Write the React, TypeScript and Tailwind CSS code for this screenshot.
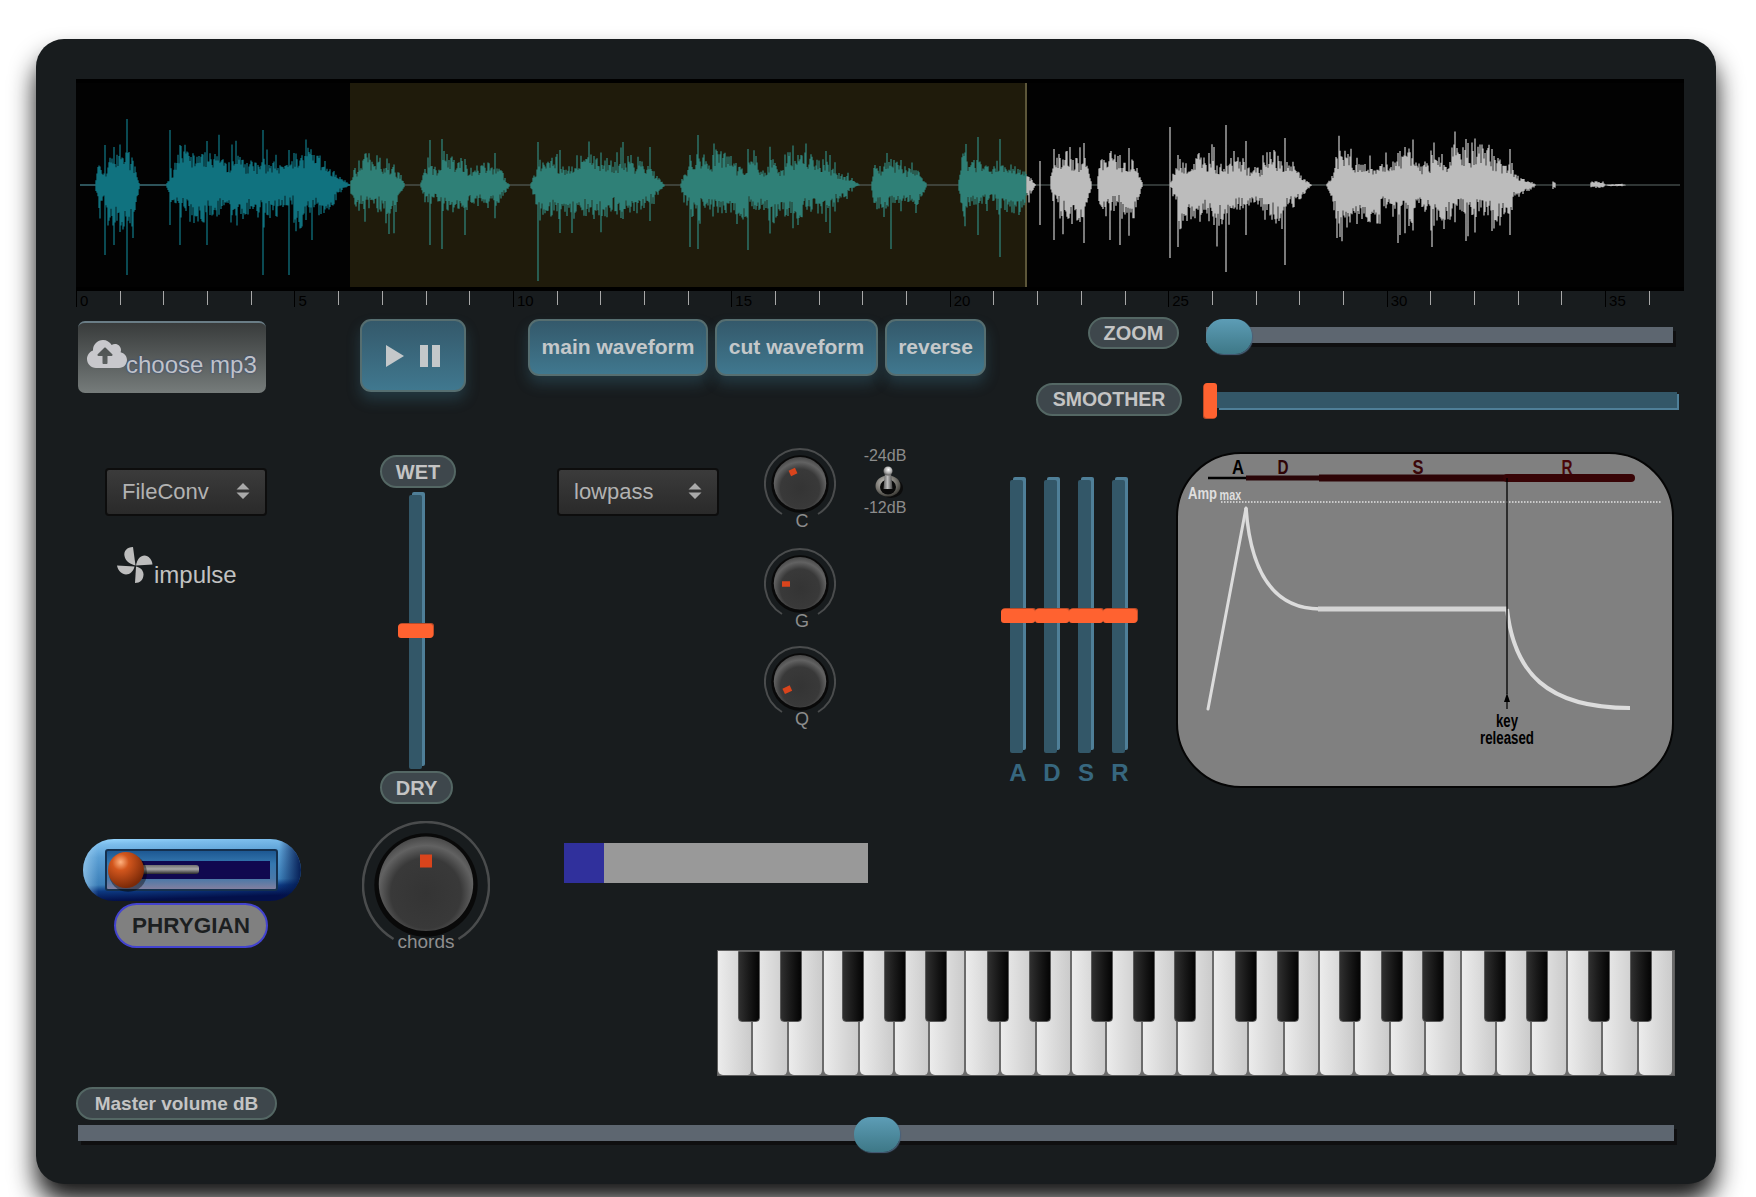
import { FaCloudUploadAlt } from 'react-icons/fa';

// envelope of the loaded sample: start, end, up, down (px in page coords)
const BLOBS: [number, number, number, number][] = [
  [95, 140, 36, 50], [166, 350, 36, 46], [350, 405, 30, 34], [420, 510, 32, 38],
  [530, 665, 34, 38], [680, 860, 34, 42], [871, 927, 28, 30], [958, 1036, 38, 44],
  [1050, 1092, 44, 46], [1097, 1143, 32, 40], [1170, 1312, 34, 46], [1326, 1536, 38, 46],
  [1552, 1556, 3, 3], [1590, 1606, 4, 3], [1606, 1626, 2, 2],
];
const SPIKES: [number, number, number][] = [
  [105, 40, 70], [114, 38, 60], [127, 66, 90], [170, 55, 40], [180, 40, 60], [207, 44, 60], [263, 55, 90],
  [289, 35, 90], [312, 30, 55], [430, 45, 60], [442, 46, 64], [465, 26, 50], [538, 43, 96], [560, 35, 48],
  [650, 38, 36], [698, 50, 64], [690, 30, 62], [748, 36, 65], [798, 30, 40], [830, 30, 48], [891, 26, 64],
  [978, 48, 50], [1000, 46, 72], [1040, 24, 40], [1054, 36, 55], [1084, 42, 58], [1110, 32, 55], [1120, 30, 60],
  [1170, 58, 73], [1178, 30, 62], [1214, 38, 40], [1226, 60, 87], [1246, 44, 50], [1285, 47, 80], [1340, 26, 52],
  [1398, 32, 58], [1400, 34, 50], [1432, 30, 62], [1466, 46, 56], [1492, 36, 46], [1510, 36, 50],
];

function buildWave() {
  let seed = 12345;
  const rnd = () => {
    seed = (seed * 1664525 + 1013904223) % 4294967296;
    return seed / 4294967296;
  };
  const cols: { x: number; up: number; down: number }[] = [];
  for (const [s, e, up, down] of BLOBS) {
    let slowUp = 1;
    let slowDown = 1;
    let next = s;
    for (let x = s; x < e; x += 1) {
      if (x >= next) {
        slowUp = 0.5 + 0.6 * rnd();
        slowDown = 0.45 + 0.6 * rnd();
        next = x + 6 + rnd() * 12;
      }
      const t = (x - s) / (e - s);
      const env = Math.min(1, t * 16) * Math.min(1, (1 - t) * 5);
      const a = 0.45 + 0.55 * rnd();
      const b = 0.45 + 0.55 * rnd();
      const kick = rnd() > 0.88 ? 1.5 : 1;
      cols.push({ x: x - 76, up: env * up * slowUp * a * kick, down: env * down * slowDown * b * kick });
    }
  }
  for (const [x, up, down] of SPIKES) cols.push({ x: x - 76, up, down });
  return cols;
}

const waveCols = buildWave();
const wavePath = (from: number, to: number) =>
  waveCols
    .filter((c) => c.x >= from && c.x < to)
    .map((c) => `M${c.x.toFixed(2)} ${(102 - c.up).toFixed(1)}V${(102 + c.down).toFixed(1)}`)
    .join('');

function Waveform() {
  return (
    <div className="relative h-[212px] w-[1608px] border-y-4 border-black bg-[#020202]">
      <div className="absolute left-[274px] top-0 h-full w-[677px] border-r-2 border-[#5c5639] bg-[#1f1b0b]" />
      <svg className="absolute inset-0" width="1608" height="204" viewBox="0 0 1608 204">
        <path d="M4 102H1604" stroke="#5f6a68" strokeWidth="1" />
        <path d="M4 102H274" stroke="#2a7080" strokeWidth="1" />
        <path d={wavePath(0, 274)} stroke="#10727f" strokeWidth="1.3" fill="none" />
        <path d={wavePath(274, 951)} stroke="#2f8077" strokeWidth="1.3" fill="none" />
        <path d={wavePath(951, 1608)} stroke="#bcbcbc" strokeWidth="1.3" fill="none" />
      </svg>
    </div>
  );
}

function Ruler() {
  return (
    <div className="flex h-4 items-start">
      {Array.from({ length: 37 }).map((_, i) =>
        i % 5 === 0 ? (
          <div key={i} className="h-4 w-[43.7px] shrink-0 border-l border-black pl-[3px] text-[15px] leading-[19px] text-black">
            {i}
          </div>
        ) : (
          <div key={i} className="h-[14px] w-[43.7px] shrink-0 border-l border-[#a8a8a8]" />
        )
      )}
    </div>
  );
}

function Pill({ children, className }: { children: React.ReactNode; className: string }) {
  return (
    <div className={`flex shrink-0 items-center justify-center rounded-full border-2 border-[#546764] bg-[#3e474c] font-bold text-[#c4c4c4] ${className}`}>
      {children}
    </div>
  );
}

function BlueButton({ children, className }: { children: React.ReactNode; className: string }) {
  return (
    <div className={`flex shrink-0 items-center justify-center rounded-[11px] border-2 border-[#566e70] bg-gradient-to-b from-[#34596b] to-[#40788f] text-[21px] font-bold text-[#c4c8ca] shadow-[0_8px_14px_rgba(64,130,155,0.28)] ${className}`}>
      {children}
    </div>
  );
}

function Select({ label, className }: { label: string; className: string }) {
  return (
    <div className={`flex h-12 w-[162px] items-center justify-between rounded-[4px] border-2 border-[#0d0d0d] bg-gradient-to-b from-[#3b3b3b] to-[#2a2a2a] pb-[2px] pl-[15px] pr-[15px] text-[22px] text-[#b2b2b2] ${className}`}>
      <span>{label}</span>
      <svg width="14" height="18" viewBox="0 0 14 18" fill="#a9a9a9">
        <path d="M7 1l6.500 6.500H.5zM7 17L.5 10.500h13z" />
      </svg>
    </div>
  );
}

// rotary knob: r is the radius of the outer ring
function Knob({ r, mark }: { r: number; mark: { x: number; y: number; w: number; h: number; rot: number } }) {
  const c = r + 1;
  const knob = r * 0.75;
  const gap = (31 * Math.PI) / 180;
  const dx = r * Math.sin(gap);
  const dy = r * Math.cos(gap);
  const gid = `knob${r}`;
  return (
    <svg width={c * 2} height={c * 2} viewBox={`0 0 ${c * 2} ${c * 2}`} className="block">
      <defs>
        <radialGradient id={gid} cx="50%" cy="60%" r="60%">
          <stop offset="0%" stopColor="#343434" />
          <stop offset="62%" stopColor="#393939" />
          <stop offset="84%" stopColor="#626262" />
          <stop offset="100%" stopColor="#484848" />
        </radialGradient>
      </defs>
      <path
        d={`M${c - dx} ${c + dy}A${r} ${r} 0 1 1 ${c + dx} ${c + dy}`}
        fill="none"
        stroke="#4a4c4d"
        strokeWidth={r > 50 ? 2.5 : 2}
      />
      <circle cx={c} cy={c} r={knob + r * 0.07} fill="#090909" />
      <circle cx={c} cy={c - r * 0.02} r={knob} fill={`url(#${gid})`} />
      <rect
        x={c + mark.x - mark.w / 2}
        y={c + mark.y - mark.h / 2}
        width={mark.w}
        height={mark.h}
        fill="#d9441c"
        transform={`rotate(${mark.rot} ${c + mark.x} ${c + mark.y})`}
      />
    </svg>
  );
}

function SmallKnob({ label, mark, className }: { label: string; mark: { x: number; y: number; w: number; h: number; rot: number }; className: string }) {
  return (
    <div className={`flex w-[72px] flex-col items-center ${className}`}>
      <Knob r={35} mark={mark} />
      <span className="-mt-[10px] ml-[4px] text-[18px] leading-[22px] text-[#8c8c8c]">{label}</span>
    </div>
  );
}

function Toggle() {
  return (
    <svg width="30" height="34" viewBox="0 0 30 34" className="ml-[6px] block">
      <defs>
        <radialGradient id="nut" cx="40%" cy="35%" r="70%">
          <stop offset="0%" stopColor="#c8c8c4" />
          <stop offset="60%" stopColor="#77756f" />
          <stop offset="100%" stopColor="#35342f" />
        </radialGradient>
        <linearGradient id="lever" x1="0" x2="1">
          <stop offset="0%" stopColor="#5a5a5a" />
          <stop offset="45%" stopColor="#bdbdbd" />
          <stop offset="100%" stopColor="#444" />
        </linearGradient>
        <radialGradient id="tip" cx="55%" cy="35%" r="65%">
          <stop offset="0%" stopColor="#ffffff" />
          <stop offset="60%" stopColor="#a8a8a8" />
          <stop offset="100%" stopColor="#5a5a5a" />
        </radialGradient>
      </defs>
      <ellipse cx="18" cy="23" rx="12" ry="10" fill="#0c0c0c" />
      <ellipse cx="15" cy="21" rx="12.500" ry="10.500" fill="url(#nut)" />
      <ellipse cx="15" cy="22" rx="8" ry="7.500" fill="#0a0a0a" />
      <path d="M12 7h6l1.500 17h-9z" fill="url(#lever)" />
      <circle cx="15" cy="6" r="4.500" fill="url(#tip)" />
    </svg>
  );
}

function VSlider({ height, thumbTop, thumbW, thumbLeft, className }: { height: number; thumbTop: number; thumbW: number; thumbLeft: number; className: string }) {
  return (
    <div
      className={`relative w-[13px] rounded-[2px] bg-[#335768] shadow-[3px_-3px_0_#4f7f98] ${className}`}
      style={{ height }}
    >
      <div
        className="absolute h-[14px] rounded-[3px] bg-[#ff6230] shadow-[1px_-1px_0_#b84a28]"
        style={{ width: thumbW, left: thumbLeft, top: thumbTop }}
      />
    </div>
  );
}

function GreySlider({ width, thumbLeft, thumbW }: { width: number; thumbLeft: number; thumbW: number }) {
  return (
    <div className="relative h-4 shrink-0 bg-[#5d6670] shadow-[3px_4px_0_#0f0f10]" style={{ width }}>
      <div
        className="absolute -top-2 h-[35px] rounded-[17px] bg-gradient-to-b from-[#5d9db6] to-[#3e7887] shadow-[1px_1px_1px_#48607a]"
        style={{ left: thumbLeft, width: thumbW }}
      />
    </div>
  );
}

function PhrygianSwitch() {
  return (
    <svg width="218" height="64" viewBox="0 0 218 64" className="ml-[7px] block">
      <defs>
        <linearGradient id="shell" x1="0" y1="0" x2="0.12" y2="1">
          <stop offset="0%" stopColor="#9ad8ff" />
          <stop offset="10%" stopColor="#7cbdec" />
          <stop offset="30%" stopColor="#5b9fd4" />
          <stop offset="74%" stopColor="#3c7fb8" />
          <stop offset="84%" stopColor="#0d3a82" />
          <stop offset="100%" stopColor="#03104a" />
        </linearGradient>
        <linearGradient id="shellEnds" x1="0" x2="1">
          <stop offset="0%" stopColor="#bfe6ff" stopOpacity="0.5" />
          <stop offset="7%" stopColor="#bfe6ff" stopOpacity="0" />
          <stop offset="90%" stopColor="#02184f" stopOpacity="0" />
          <stop offset="100%" stopColor="#02184f" stopOpacity="0.95" />
        </linearGradient>
        <linearGradient id="well" x1="0" y1="0" x2="0" y2="1">
          <stop offset="0%" stopColor="#1b5590" />
          <stop offset="35%" stopColor="#3578b0" />
          <stop offset="72%" stopColor="#4a78a8" />
          <stop offset="100%" stopColor="#86809f" />
        </linearGradient>
        <radialGradient id="ball" cx="35%" cy="28%" r="72%">
          <stop offset="0%" stopColor="#ffb27f" />
          <stop offset="32%" stopColor="#d2561d" />
          <stop offset="100%" stopColor="#7c2a08" />
        </radialGradient>
        <linearGradient id="rod" x1="0" y1="0" x2="0" y2="1">
          <stop offset="0%" stopColor="#6f6f6f" />
          <stop offset="45%" stopColor="#a8a8a8" />
          <stop offset="100%" stopColor="#2a2a2a" />
        </linearGradient>
      </defs>
      <rect x="0" y="0" width="218" height="62" rx="31" fill="url(#shell)" />
      <rect x="0" y="0" width="218" height="62" rx="31" fill="url(#shellEnds)" />
      <rect x="23" y="11" width="171" height="40" rx="2" fill="url(#well)" stroke="#14304f" strokeWidth="2" />
      <rect x="42" y="22" width="145" height="18" fill="#10084f" />
      <rect x="50" y="26" width="66" height="9" rx="3" fill="url(#rod)" />
      <circle cx="45" cy="34" r="19" fill="#000" opacity="0.4" />
      <circle cx="43" cy="31" r="18" fill="url(#ball)" />
    </svg>
  );
}

function EnvelopeGraph() {
  return (
    <svg width="498" height="336" viewBox="-2 0 498 336" className="block shrink-0">
      <rect x="-1" y="1" width="496" height="334" rx="64" fill="#808080" stroke="#050505" strokeWidth="2" />
      <path d="M30 26H68" stroke="#000" strokeWidth="2.500" />
      <path d="M68 26H141" stroke="#2a0608" strokeWidth="5" />
      <path d="M141 26H329" stroke="#2e0406" strokeWidth="7" />
      <path d="M329 26H453" stroke="#380406" strokeWidth="8" strokeLinecap="round" />
      <text x="60" y="22" textAnchor="middle" fontSize="20" fontWeight="700" fill="#000" textLength="12" lengthAdjust="spacingAndGlyphs">A</text>
      <text x="105" y="22" textAnchor="middle" fontSize="20" fontWeight="700" fill="#2e0406" textLength="11" lengthAdjust="spacingAndGlyphs">D</text>
      <text x="240" y="22" textAnchor="middle" fontSize="20" fontWeight="700" fill="#3a0608" textLength="11" lengthAdjust="spacingAndGlyphs">S</text>
      <text x="389" y="22" textAnchor="middle" fontSize="20" fontWeight="700" fill="#4a0608" textLength="11" lengthAdjust="spacingAndGlyphs">R</text>
      <g transform="translate(10 47) scale(0.77 1)" fontWeight="700" fill="#dedede">
        <text x="0" y="0" fontSize="17">Amp</text>
        <text x="41" y="1" fontSize="14">max</text>
      </g>
      <path d="M43 50H483" stroke="#e4e4e4" strokeWidth="1.500" strokeDasharray="1.500 1.500" />
      <path d="M30 257L68 56" fill="none" stroke="#dcdcdc" strokeWidth="3" strokeLinecap="round" />
      <path d="M68 56C72 112 90 157 142 157" fill="none" stroke="#dcdcdc" strokeWidth="3.500" />
      <path d="M140 157H329" stroke="#d4d4d4" strokeWidth="5" />
      <path d="M329 157C336 220 368 256 452 256" fill="none" stroke="#dcdcdc" strokeWidth="4" />
      <path d="M329 26V242" stroke="#000" strokeWidth="1.300" />
      <path d="M329 241L326 250H328.400V257H329.600V250H332Z" fill="#000" />
      <text x="329" y="275" textAnchor="middle" fontSize="18" fontWeight="700" fill="#000" textLength="22" lengthAdjust="spacingAndGlyphs">key</text>
      <text x="329" y="292" textAnchor="middle" fontSize="18" fontWeight="700" fill="#000" textLength="54" lengthAdjust="spacingAndGlyphs">released</text>
    </svg>
  );
}

const BLACK_LEFTS = [20, 62, 124, 166, 207];

function Piano() {
  const blacks: number[] = [];
  for (let o = 0; o < 4; o++) {
    for (const l of BLACK_LEFTS) {
      const x = l + o * 248.5;
      if (x < 930) blacks.push(x);
    }
  }
  return (
    <div className="relative ml-[641px] flex h-[126px] w-[958px] border border-[#5f5f5f] bg-[#6b6b6b]">
      {Array.from({ length: 27 }).map((_, i) => (
        <div
          key={i}
          className="h-full flex-1 rounded-b-[5px] border-r-2 border-[#6b6b6b] bg-gradient-to-r from-[#ececec] to-[#cbcbcb]"
        />
      ))}
      {blacks.map((x) => (
        <div
          key={x}
          className="absolute top-0 h-[71px] w-[22px] rounded-b-[4px] border border-[#5a5a5a] bg-gradient-to-r from-[#303030] to-[#050505]"
          style={{ left: x }}
        />
      ))}
    </div>
  );
}

function AdsrFader({ label, thumbLeft }: { label: string; thumbLeft: number }) {
  return (
    <div className="flex w-[34px] flex-col items-center">
      <VSlider height={273} thumbTop={129} thumbW={34} thumbLeft={thumbLeft} className="mr-[3px]" />
      <span className="mt-[6px] text-[24px] font-bold leading-[28px] text-[#37677f]">{label}</span>
    </div>
  );
}

export default function App() {
  return (
    <div className="h-[1197px] w-[1756px] overflow-hidden bg-white pt-[39px] [font-family:'Liberation_Sans',Arial,sans-serif]">
      <div className="ml-[36px] h-[1145px] w-[1680px] rounded-[28px] bg-[#181c1e] pl-[40px] pt-[40px] shadow-[0_18px_26px_rgba(0,0,0,0.92)]">
        <Waveform />
        <Ruler />

        <div className="flex h-[643px] items-start">
          {/* source, convolver, scale */}
          <div className="w-[284px] shrink-0">
            <div className="ml-[2px] mt-[14px] flex h-[72px] w-[188px] items-start rounded-[7px] border-t-2 border-[#6a7d86] bg-gradient-to-b from-[#393c3c] to-[#767c7b] pl-[9px] pt-[13px] text-[24px] text-[#c0c2c8] [text-shadow:0_0_2px_#25407a]">
              <FaCloudUploadAlt className="h-[36px] w-[40px] shrink-0 text-[#c8c8cc]" />
              <span className="mt-[15px] -ml-[1px] leading-[28px]">choose mp3</span>
            </div>
            <Select label="FileConv" className="ml-[29px] mt-[75px]" />
            <div className="ml-[41px] mt-[30px] flex h-[40px] items-start text-[#c2c2c2]">
              <svg width="36" height="38" viewBox="0 0 36 38" fill="#bdbdbd" className="shrink-0">
                <path d="M18.500 19.500L16 1C10 1 6.500 5 7.500 10C8.500 15.500 14 18.500 18.500 19.500Z" />
                <path d="M19 19.500C20 13 23.500 9.500 27.500 9.500C31.500 9.500 35 13.500 35.500 18.500Z" />
                <path d="M19 20.500C24 21.500 26.500 25 26.500 28.500C26.500 33.500 23 37 18 37Z" />
                <path d="M17.500 20.500L0 19.500C1 25 5 28.500 9 28.500C13 28.500 16.500 25 17.500 20.500Z" />
              </svg>
              <span className="ml-[1px] mt-[15px] text-[24px] leading-[28px]">impulse</span>
            </div>
            <div className="mt-[253px]">
              <PhrygianSwitch />
            </div>
            <div className="ml-[38px] flex h-[45px] w-[154px] items-center justify-center rounded-full border-2 border-[#4343cf] bg-[#808080] text-[22.500px] font-bold text-[#1c1f21]">
              PHRYGIAN
            </div>
          </div>

          {/* transport and wet/dry */}
          <div className="w-[168px] shrink-0">
            <BlueButton className="mt-[12px] h-[73px] w-[106px] gap-[16px]">
              <svg width="18" height="22" viewBox="0 0 18 22" fill="#c4c8ca"><path d="M0 0l18 11L0 22z" /></svg>
              <svg width="21" height="22" viewBox="0 0 21 22" fill="#c4c8ca"><path d="M0 0h8v22H0zM12 0h8v22h-8z" /></svg>
            </BlueButton>
            <Pill className="ml-[20px] mt-[63px] h-[33px] w-[76px] text-[20px]">WET</Pill>
            <VSlider height={274} thumbTop={129} thumbW={35} thumbLeft={-11} className="ml-[49px] mt-[7px]" />
            <Pill className="ml-[20px] mt-[2px] h-[33px] w-[73px] text-[20px]">DRY</Pill>
            <div className="ml-[2px] mt-[17px] flex w-[128px] flex-col items-center">
              <Knob r={63} mark={{ x: 0, y: -24, w: 12, h: 13, rot: 0 }} />
              <span className="-mt-[19px] text-[19px] leading-[24px] text-[#8e8e8e]">chords</span>
            </div>
          </div>

          {/* waveform buttons, filter */}
          <div className="w-[472px] shrink-0">
            <div className="mt-[12px] flex gap-[7px]">
              <BlueButton className="h-[57px] w-[180px] pb-[2px]">main waveform</BlueButton>
              <BlueButton className="h-[57px] w-[163px] pb-[2px]">cut waveform</BlueButton>
              <BlueButton className="h-[57px] w-[101px] pb-[2px]">reverse</BlueButton>
            </div>
            <div className="flex h-[360px] items-start">
              <Select label="lowpass" className="ml-[29px] mt-[92px]" />
              <div className="ml-[45px] mt-[72px] flex flex-col">
                <SmallKnob label="C" mark={{ x: -7, y: -12, w: 7, h: 6, rot: -25 }} className="h-[100px]" />
                <SmallKnob label="G" mark={{ x: -14, y: 0, w: 8, h: 5.500, rot: 0 }} className="h-[98px]" />
                <SmallKnob label="Q" mark={{ x: -12.700, y: 7.700, w: 8, h: 6, rot: -25 }} className="h-[86px]" />
              </div>
              <div className="ml-[26px] mt-[71px] flex w-[46px] flex-col items-center text-[16px] leading-[18px] text-[#8c8c8c]">
                <span>-24dB</span>
                <Toggle />
                <span>-12dB</span>
              </div>
            </div>
            <div className="ml-[36px] mt-[107px] flex h-10 w-[304px] bg-[#999999]">
              <div className="h-full w-10 bg-[#30309c]" />
            </div>
          </div>

          {/* zoom, smoother, envelope */}
          <div className="w-[684px] shrink-0">
            <div className="mt-[10px] flex items-start">
              <Pill className="ml-[88px] h-[32px] w-[91px] text-[20px]">ZOOM</Pill>
              <div className="ml-[27px] mt-[10px]">
                <GreySlider width={467} thumbLeft={0} thumbW={46} />
              </div>
            </div>
            <div className="mt-[34px] flex items-center">
              <Pill className="ml-[36px] h-[33px] w-[146px] text-[19.500px]">SMOOTHER</Pill>
              <div className="relative ml-[35px] h-4 w-[460px] bg-[#335768] shadow-[2px_2px_0_#4f7f98]">
                <div className="absolute -left-[13px] -top-[9px] h-[35px] w-[13px] rounded-[3px] bg-[#ff6230] shadow-[-1px_1px_0_#b84a28]" />
              </div>
            </div>
            <div className="mt-[36px] flex items-start">
              <div className="ml-[1px] mt-[28px] flex w-[175px] items-start">
                <AdsrFader label="A" thumbLeft={-9} />
                <AdsrFader label="D" thumbLeft={-9} />
                <AdsrFader label="S" thumbLeft={-9} />
                <AdsrFader label="R" thumbLeft={-9} />
              </div>
              <EnvelopeGraph />
            </div>
          </div>
        </div>

        <Piano />

        <Pill className="mt-[11px] h-[33px] w-[201px] pt-[1px] text-[19px]">Master volume dB</Pill>
        <div className="ml-[2px] mt-[5px]">
          <GreySlider width={1596} thumbLeft={776} thumbW={46} />
        </div>
      </div>
    </div>
  );
}
